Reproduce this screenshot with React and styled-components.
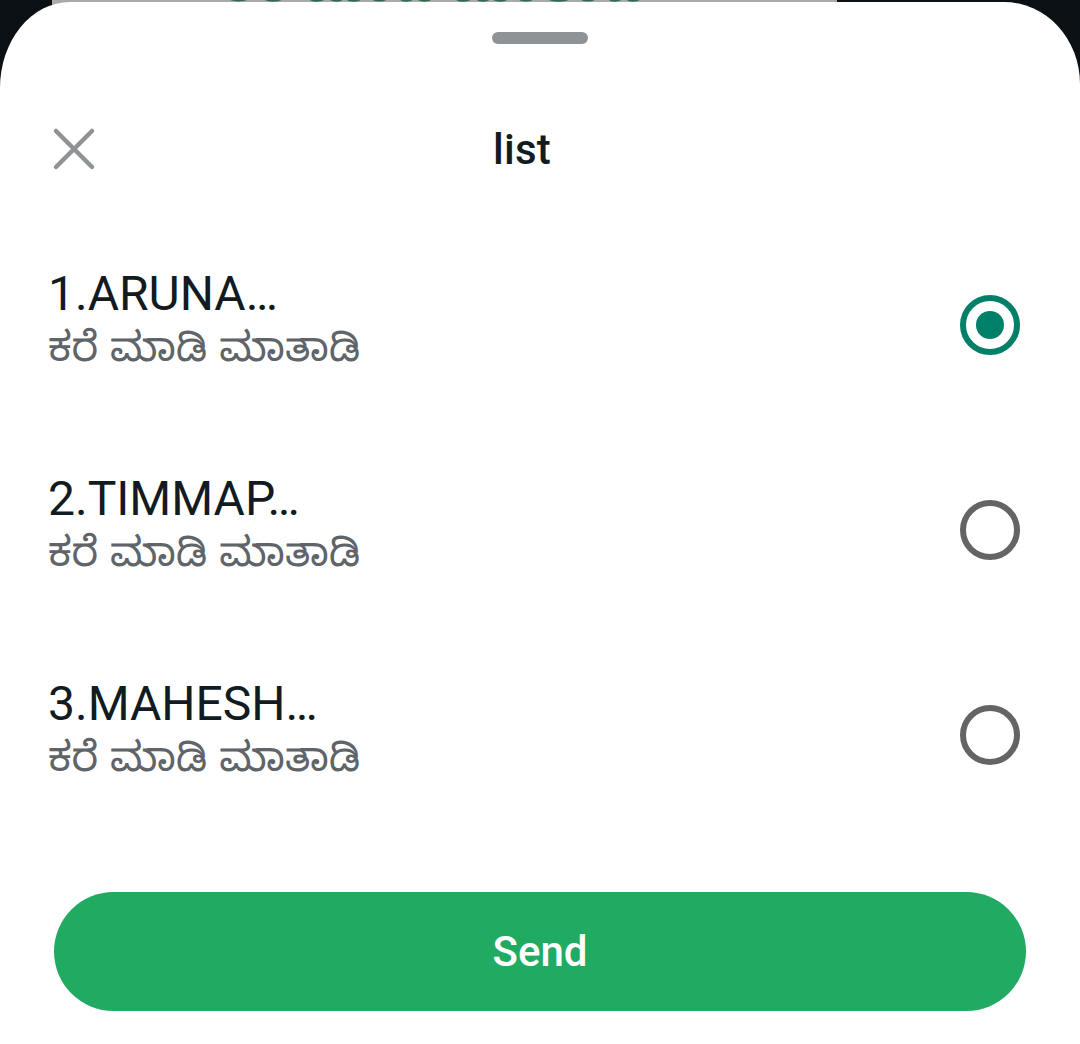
import React, { useState } from 'react'
import styled, { createGlobalStyle } from 'styled-components'

const GlobalStyle = createGlobalStyle`
  html, body {
    margin: 0;
    padding: 0;
    background: #0b1014;
  }
  body {
    font-family: Roboto, "Noto Sans", "Noto Sans Kannada", sans-serif;
    -webkit-font-smoothing: antialiased;
  }
`

const Screen = styled.div`
  position: relative;
  width: 1080px;
  height: 1044px;
  overflow: hidden;
  background: #0b1014;
  display: flex;
  flex-direction: column;
`

// chat bubble peeking out behind the sheet
const BehindCard = styled.div`
  position: absolute;
  top: -60px;
  left: 52px;
  width: 785px;
  height: 140px;
  background: #a9aaaa;
  color: #2f6b4c;
  font-size: 52px;
  font-weight: 700;
  display: flex;
  align-items: flex-end;
  padding-left: 170px;
  box-sizing: border-box;
  line-height: 1;
  padding-bottom: 70px;
`

const Sheet = styled.div`
  position: relative;
  z-index: 1;
  margin-top: 2px;
  flex: 1;
  background: #ffffff;
  border-radius: 70px 76px 0 0 / 86px 82px 0 0;
  display: flex;
  flex-direction: column;
`

const Handle = styled.div`
  width: 96px;
  height: 12px;
  border-radius: 6px;
  background: #8f9396;
  margin: 30px auto 0;
`

const Header = styled.div`
  display: flex;
  align-items: center;
  height: 86px;
  margin-top: 62px;
  padding: 0 144px 0 40px;
`

const CloseButton = styled.button`
  width: 68px;
  height: 68px;
  border: none;
  background: none;
  padding: 0;
  display: flex;
  align-items: center;
  justify-content: center;
  cursor: pointer;
`

const Title = styled.div`
  flex: 1;
  text-align: center;
  font-size: 42px;
  font-weight: 500;
  color: #111b21;
  letter-spacing: 0.2px;
`

const List = styled.div`
  display: flex;
  flex-direction: column;
  margin-top: 30px;
`

const Row = styled.label`
  height: 205px;
  display: flex;
  align-items: center;
  justify-content: space-between;
  padding: 0 60px 0 48px;
  cursor: pointer;
`

const Texts = styled.div`
  display: flex;
  flex-direction: column;
  gap: 4px;
`

const Name = styled.div`
  font-size: 48px;
  line-height: 58px;
  color: #111b21;
`

const Subtitle = styled.div`
  font-family: "Noto Sans Kannada", "Noto Sans", Roboto, sans-serif;
  font-size: 41px;
  line-height: 58px;
  color: #5f6469;
`

const Radio = styled.span`
  width: 60px;
  height: 60px;
  box-sizing: border-box;
  border-radius: 50%;
  border: 6px solid ${p => (p.$checked ? '#008069' : '#646464')};
  display: flex;
  align-items: center;
  justify-content: center;
  &::after {
    content: '';
    width: 28px;
    height: 28px;
    border-radius: 50%;
    background: #008069;
    display: ${p => (p.$checked ? 'block' : 'none')};
  }
`

const Footer = styled.div`
  padding: 55px 54px 0;
`

const SendButton = styled.button`
  width: 100%;
  height: 119px;
  border: none;
  border-radius: 60px;
  background: #21aa62;
  color: #ffffff;
  font-family: Roboto, sans-serif;
  font-size: 42px;
  font-weight: 500;
  cursor: pointer;
`

const items = ['1.ARUNA…', '2.TIMMAP…', '3.MAHESH…']

const App = () => {
  const [selected, setSelected] = useState(0)
  return (
    <>
      <GlobalStyle />
      <Screen>
        <BehindCard>ಕರೆ ಮಾಡಿ ಮಾತಾಡಿ</BehindCard>
        <Sheet>
          <Handle />
          <Header>
            <CloseButton aria-label="close">
              <svg width="44" height="44" viewBox="0 0 44 44">
                <path d="M4 4 L40 40 M40 4 L4 40" stroke="#8f9396" strokeWidth="4.5" strokeLinecap="round" />
              </svg>
            </CloseButton>
            <Title>list</Title>
          </Header>
          <List>
            {items.map((name, i) => (
              <Row key={name} onClick={() => setSelected(i)}>
                <Texts>
                  <Name>{name}</Name>
                  <Subtitle>ಕರೆ ಮಾಡಿ ಮಾತಾಡಿ</Subtitle>
                </Texts>
                <Radio $checked={selected === i} />
              </Row>
            ))}
          </List>
          <Footer>
            <SendButton>Send</SendButton>
          </Footer>
        </Sheet>
      </Screen>
    </>
  )
}

export default App
